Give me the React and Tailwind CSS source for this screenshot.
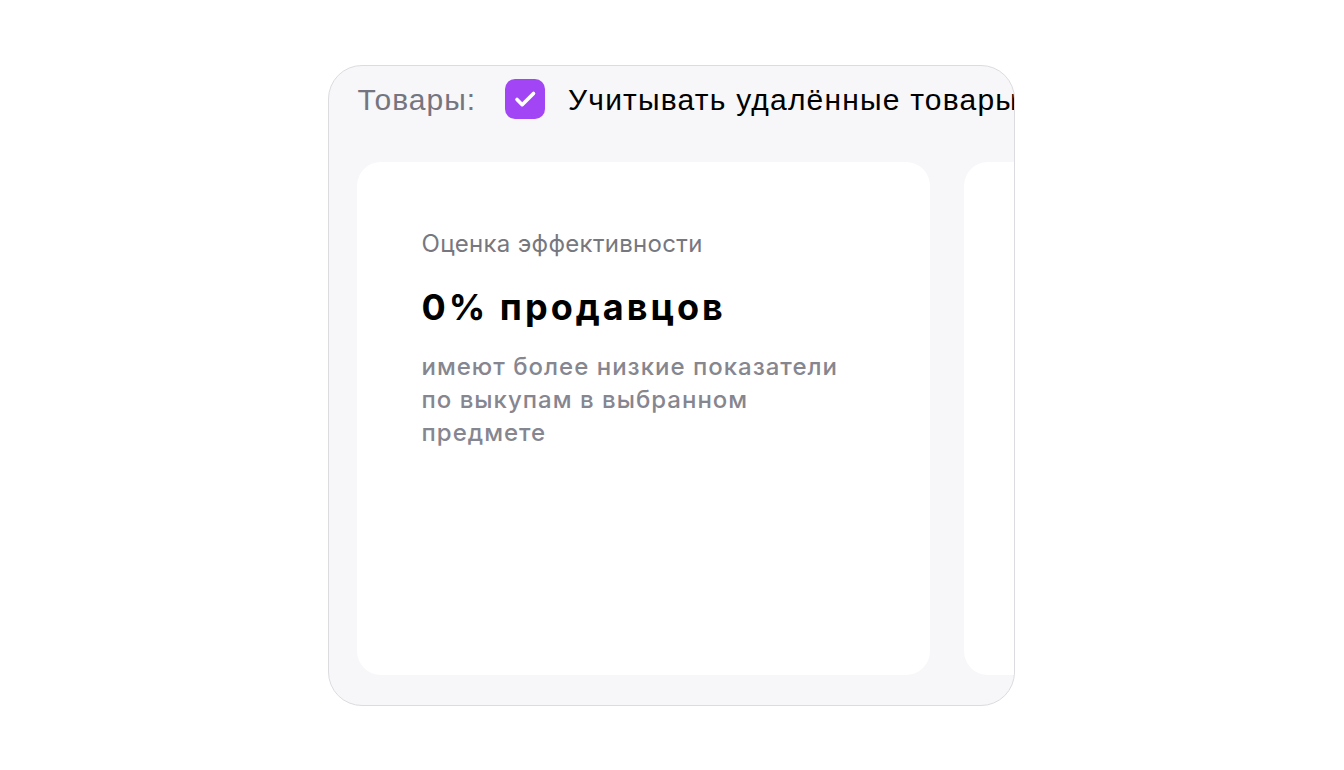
import React from 'react'

const CheckIcon = () => (
  <svg width="40" height="40" viewBox="0 0 40 40" fill="none">
    <path d="M12 20.5l5.2 5.2L28.5 14.5" stroke="white" strokeWidth="3.6" strokeLinecap="round" strokeLinejoin="round" />
  </svg>
)

const App = () => {
  return (
    <div className="min-h-screen bg-white flex justify-center pt-[65px]" style={{ fontFamily: 'Inter, "Noto Sans", sans-serif' }}>
      <div className="w-[687px] h-[641px] ml-[-2px] rounded-[34px] border border-[#dcdce0] bg-[#f7f7f9] overflow-hidden flex flex-col">
        {/* Header */}
        <div className="flex items-center h-[66px] pl-[29px] whitespace-nowrap" style={{ fontFamily: '"Liberation Sans", Arial, sans-serif' }}>
          <span className="text-[30px] tracking-[1px] text-[#75757f]">Товары:</span>
          <div className="ml-[29px] w-[40px] h-[40px] rounded-[10px] bg-[#a245f5] flex items-center justify-center shrink-0">
            <CheckIcon />
          </div>
          <span className="ml-[23px] text-[30px] tracking-[1.2px] text-black">Учитывать удалённые товары</span>
        </div>

        {/* Cards */}
        <div className="flex gap-[34px] pl-[28px] pt-[30px] pb-[30px] flex-1">
          <div className="w-[573px] shrink-0 bg-white rounded-[24px] pl-[65px] pt-[67px]">
            <p className="text-[24px] tracking-[0.3px] text-[#77777f] leading-[30px]">Оценка эффективности</p>
            <p className="mt-[28px] text-[36px] font-bold tracking-[3px] text-black leading-[40px]">0% продавцов</p>
            <p className="mt-[23px] w-[440px] text-[24px] font-medium tracking-[1px] text-[#868690] leading-[33px]">
              имеют более низкие показатели по выкупам в выбранном предмете
            </p>
          </div>
          <div className="w-[573px] shrink-0 bg-white rounded-[24px]"></div>
        </div>
      </div>
    </div>
  )
}

export default App
